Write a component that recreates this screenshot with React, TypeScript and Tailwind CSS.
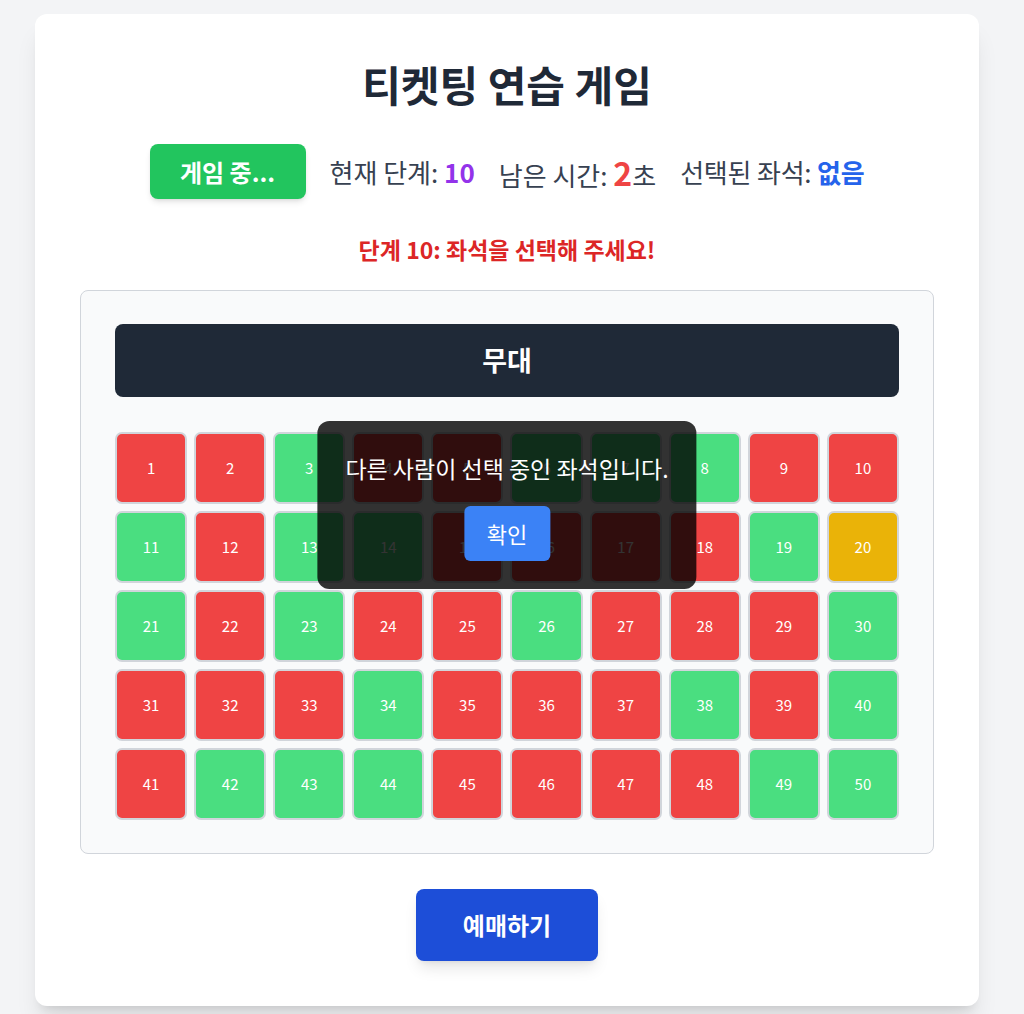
import React from "react";

type S = "r" | "g" | "y";
const layout: S[] = [
  "r","r","g","r","r","g","g","g","r","r",
  "g","r","g","g","r","r","r","r","g","y",
  "g","r","g","r","r","g","r","r","r","g",
  "r","r","r","g","r","r","r","g","r","g",
  "r","g","g","g","r","r","r","r","g","g",
];

const seatColor: Record<S, string> = {
  r: "bg-[#ef4444]",
  g: "bg-[#4ade80]",
  y: "bg-[#eab308]",
};

export default function App() {
  return (
    <div
      className="min-h-screen bg-[#f3f4f6] pt-[14px] pl-[35px] pb-10"
      style={{ fontFamily: '"Noto Sans CJK KR", "Noto Sans", sans-serif' }}
    >
      <div className="relative w-[944px] rounded-xl bg-white px-[45px] pt-[45px] pb-[45px] shadow-xl">
        <h1 className="text-center text-[42px] font-bold leading-[50px] text-[#1f2937]">
          티켓팅 연습 게임
        </h1>

        <div className="mt-[35px] flex items-center justify-center gap-6 text-[26px] text-[#374151]">
          <button className="h-[55px] w-[156px] rounded-lg bg-[#22c55e] text-[24px] font-bold text-white shadow-md">
            게임 중...
          </button>
          <span>
            현재 단계: <span className="font-bold text-[#9333ea]">10</span>
          </span>
          <span>
            남은 시간: <span className="text-[32px] font-bold text-[#ef4444]">2</span>초
          </span>
          <span className="tracking-[-0.2px]">
            선택된 좌석: <span className="font-bold text-[#2563eb]">없음</span>
          </span>
        </div>

        <p className="mt-9 text-center text-[23px] font-bold leading-[28px] text-[#dc2626]">
          단계 10: 좌석을 선택해 주세요!
        </p>

        <div className="mt-[27px] rounded-lg border border-[#d1d5db] bg-[#f9fafb] px-[34px] py-[33px]">
          <div className="flex h-[73px] items-center justify-center rounded-lg bg-[#1f2937] text-[27px] font-bold text-white">
            무대
          </div>
          <div className="mt-[35px] grid grid-cols-10 gap-[7px]">
            {layout.map((s, i) => (
              <div
                key={i}
                className={`flex h-[72px] items-center justify-center rounded-[7px] border-2 border-[#d1d5db] text-[15px] text-white ${seatColor[s]}`}
              >
                {i + 1}
              </div>
            ))}
          </div>
        </div>

        <div className="mt-[35px] flex justify-center">
          <button className="h-[72px] w-[182px] rounded-lg bg-[#1d4ed8] text-[24px] font-bold text-white shadow-lg">
            예매하기
          </button>
        </div>

        <div className="absolute left-1/2 top-[407px] w-max -translate-x-1/2 rounded-xl bg-black/80 px-7 pt-[33px] pb-7 text-center">
          <p className="text-[23px] leading-[28px] text-white">다른 사람이 선택 중인 좌석입니다.</p>
          <button className="mt-6 h-[55px] w-[86px] rounded-md bg-[#3b82f6] text-[22px] text-white">
            확인
          </button>
        </div>
      </div>
    </div>
  );
}
